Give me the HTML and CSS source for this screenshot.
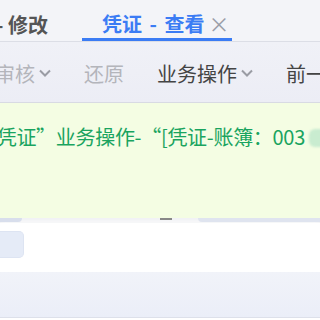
FILE: index.html
```html
<!DOCTYPE html>
<html lang="zh-CN">
<head>
    <meta charset="UTF-8">
    <meta name="viewport" content="width=device-width, initial-scale=1.0">
    <title>凭证 - 查看</title>
    <link rel="stylesheet" href="styles.css">
</head>
<body>
    <div class="tabs">
        <div class="tab tab-prev">- 修改</div>
        <div class="tab tab-active">凭证 - 查看<span class="close">&times;</span></div>
    </div>

    <div class="toolbar">
        <span class="tool disabled">审核<svg class="caret" viewBox="0 0 12 8"><path d="M1 1.5l5 5 5-5"/></svg></span>
        <span class="tool disabled">还原</span>
        <span class="tool">业务操作<svg class="caret" viewBox="0 0 12 8"><path d="M1 1.5l5 5 5-5"/></svg></span>
        <span class="tool">前一</span>
    </div>

    <div class="message">
        <p>“凭证”业务操作-“[凭证-账簿：003<span class="blur"></span></p>
    </div>

    <div class="peek">
        <span class="peek-a"></span>
        <span class="peek-b"></span>
        <span class="peek-c"></span>
    </div>

    <div class="content">
        <div class="field"></div>
    </div>

    <div class="footer"></div>
</body>
</html>
```

FILE: styles.css
```css
body {
    margin: 0;
    width: 320px;
    height: 320px;
    overflow: hidden;
    background-color: white;
    font-family: "Noto Sans CJK SC", "Noto Sans", sans-serif;
}
.tabs {
    height: 41px;
    display: flex;
    align-items: flex-end;
    background-color: #f3f4f8;
    border-bottom: 1px solid #dcdee6;
    white-space: nowrap;
}
.tab {
    height: 38px;
    font-size: 20px;
    font-weight: bold;
    box-sizing: border-box;
}
.tab-prev {
    color: #555;
    line-height: 44px;
    margin-left: -4px;
    width: 86px;
    flex-shrink: 0;
}
.tab-active {
    color: #3b7cf4;
    padding: 0 3px 0 20px;
    border-bottom: 3px solid #3b7cf4;
    line-height: 40px;
    word-spacing: 3px;
}
.close {
    color: #9a9ea8;
    font-weight: normal;
    font-size: 21px;
    margin-left: 4px;
}
.toolbar {
    height: 61px;
    display: flex;
    align-items: center;
    gap: 33px;
    margin-left: -5px;
    padding-top: 2px;
    box-sizing: border-box;
    background: linear-gradient(#f0f1f7, #ecedf5);
    border-bottom: 1px solid #d8dae3;
    white-space: nowrap;
    font-size: 20px;
    color: #444;
}
.tool {
    display: flex;
    align-items: center;
}
.disabled {
    color: #b4b5bb;
}
.caret {
    width: 12px;
    height: 8px;
    margin-left: 4px;
    fill: none;
    stroke: #9a9ca4;
    stroke-width: 2;
}
.message {
    height: 115px;
    background-color: #f4fde3;
    color: #1aa45f;
    font-size: 20px;
    overflow: hidden;
    white-space: nowrap;
}
.message p {
    margin: 19px 0 0 -23px;
    line-height: 30px;
    letter-spacing: -0.3px;
}
.blur {
    display: inline-block;
    width: 20px;
    height: 18px;
    margin-left: 4px;
    vertical-align: -2px;
    background-color: #c9ecd0;
    border-radius: 6px;
    filter: blur(1px);
}
.peek {
    height: 5px;
    display: flex;
    align-items: flex-start;
    box-shadow: inset 0 4px 6px rgba(120, 130, 160, 0.12);
}
.peek-a {
    width: 22px;
    height: 4px;
    background-color: #d8deec;
    border-radius: 0 0 6px 0;
}
.peek-b {
    width: 12px;
    height: 2px;
    margin-left: 138px;
    background-color: #888;
}
.peek-c {
    width: 124px;
    height: 4px;
    margin-left: 26px;
    background-color: #dfe4ef;
    border-radius: 0 0 0 6px;
}
.content {
    height: 49px;
    padding-top: 8px;
    box-sizing: border-box;
}
.field {
    width: 23px;
    height: 25px;
    background-color: #e5ebf7;
    border: 1px solid #dde4f2;
    border-left: none;
    border-radius: 0 5px 5px 0;
}
.footer {
    height: 45px;
    background: linear-gradient(#f1f3f9, #ebeef8);
    border-bottom: 1px solid #dde0ea;
}
```
